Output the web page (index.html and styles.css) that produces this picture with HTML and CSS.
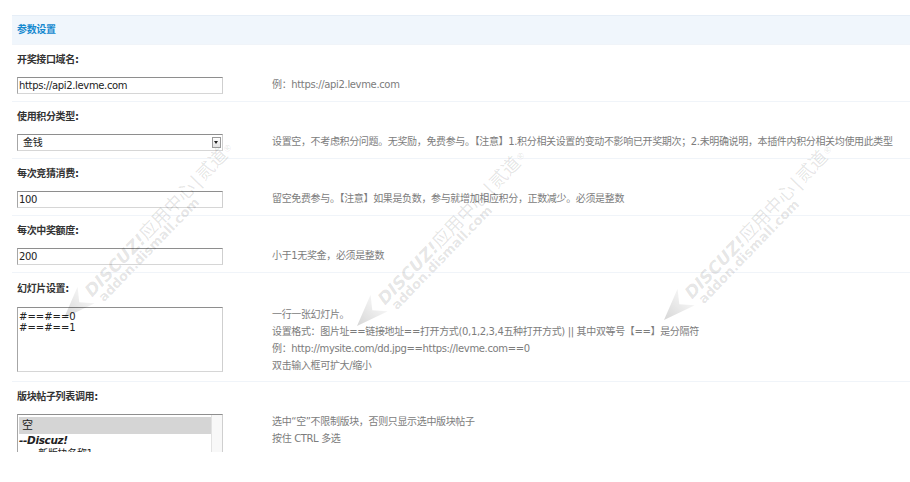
FILE: index.html
```html
<!DOCTYPE html>
<html lang="zh-CN">
<head>
<meta charset="utf-8">
<title>参数设置</title>
<link rel="stylesheet" href="styles.css">
</head>
<body>
<div class="page">
  <div class="partition">参数设置</div>

  <div class="row">
    <div class="label">开奖接口域名:</div>
    <div class="field">
      <div class="control"><input class="txt" type="text" value="https://api2.levme.com"></div>
      <div class="tips">例：https://api2.levme.com</div>
    </div>
  </div>

  <div class="row">
    <div class="label">使用积分类型:</div>
    <div class="field">
      <div class="control">
        <div class="select"><span>金钱</span><span class="sel-btn"></span></div>
      </div>
      <div class="tips">设置空，不考虑积分问题。无奖励，免费参与。【注意】1.积分相关设置的变动不影响已开奖期次；2.未明确说明，本插件内积分相关均使用此类型</div>
    </div>
  </div>

  <div class="row">
    <div class="label">每次竞猜消费:</div>
    <div class="field">
      <div class="control"><input class="txt" type="text" value="100"></div>
      <div class="tips">留空免费参与。【注意】如果是负数，参与就增加相应积分，正数减少。必须是整数</div>
    </div>
  </div>

  <div class="row">
    <div class="label">每次中奖额度:</div>
    <div class="field">
      <div class="control"><input class="txt" type="text" value="200"></div>
      <div class="tips">小于1无奖金，必须是整数</div>
    </div>
  </div>

  <div class="row row-tall">
    <div class="label">幻灯片设置:</div>
    <div class="field">
      <div class="control"><textarea class="area">#==#==0
#==#==1</textarea></div>
      <div class="tips">
        <div>一行一张幻灯片。</div>
        <div>设置格式：图片址==链接地址==打开方式(0,1,2,3,4五种打开方式) || 其中双等号【==】是分隔符</div>
        <div>例：http://mysite.com/dd.jpg==https://levme.com==0</div>
        <div>双击输入框可扩大/缩小</div>
      </div>
    </div>
  </div>

  <div class="row">
    <div class="label">版块帖子列表调用:</div>
    <div class="field">
      <div class="control">
        <div class="listbox">
          <div class="opts">
            <div class="opt opt-sel">空</div>
            <div class="opt opt-group">--Discuz!</div>
            <div class="opt">　　新版块名称1</div>
            <div class="opt">　　新版块名称2</div>
          </div>
          <div class="scroll"></div>
        </div>
      </div>
      <div class="tips">
        <div>选中“空”不限制版块，否则只显示选中版块帖子</div>
        <div>按住 CTRL 多选</div>
      </div>
    </div>
  </div>

  <div class="wm wm1">
    <svg class="wm-logo" width="32" height="24" viewBox="0 0 32 24"><defs><linearGradient id="g1" x1="0" y1="0" x2="1" y2="0"><stop offset="0" stop-color="#000" stop-opacity="0.16"/><stop offset="1" stop-color="#000" stop-opacity="0.04"/></linearGradient></defs><polygon points="0,12 32,0 22,12 32,24" fill="url(#g1)"/></svg>
    <div class="wm-text">
      <div class="wm-l1"><span class="wm-dz">DISCUZ!</span>应用中心<span class="wm-bar">|</span>贰道<span class="wm-r">®</span></div>
      <div class="wm-l2">addon.dismall.com</div>
    </div>
  </div>
  <div class="wm wm2">
    <svg class="wm-logo" width="32" height="24" viewBox="0 0 32 24"><defs><linearGradient id="g2" x1="0" y1="0" x2="1" y2="0"><stop offset="0" stop-color="#000" stop-opacity="0.16"/><stop offset="1" stop-color="#000" stop-opacity="0.04"/></linearGradient></defs><polygon points="0,12 32,0 22,12 32,24" fill="url(#g2)"/></svg>
    <div class="wm-text">
      <div class="wm-l1"><span class="wm-dz">DISCUZ!</span>应用中心<span class="wm-bar">|</span>贰道<span class="wm-r">®</span></div>
      <div class="wm-l2">addon.dismall.com</div>
    </div>
  </div>
  <div class="wm wm3">
    <svg class="wm-logo" width="32" height="24" viewBox="0 0 32 24"><defs><linearGradient id="g3" x1="0" y1="0" x2="1" y2="0"><stop offset="0" stop-color="#000" stop-opacity="0.16"/><stop offset="1" stop-color="#000" stop-opacity="0.04"/></linearGradient></defs><polygon points="0,12 32,0 22,12 32,24" fill="url(#g3)"/></svg>
    <div class="wm-text">
      <div class="wm-l1"><span class="wm-dz">DISCUZ!</span>应用中心<span class="wm-bar">|</span>贰道<span class="wm-r">®</span></div>
      <div class="wm-l2">addon.dismall.com</div>
    </div>
  </div>
</div>
</body>
</html>
```

FILE: styles.css
```css
html, body {
  margin: 0;
  padding: 0;
  background: #fff;
}

body {
  font-family: "DejaVu Sans", "Noto Sans CJK SC", sans-serif;
  font-size: 10px;
  line-height: 16px;
  letter-spacing: -0.35px;
  color: #333;
}

.page {
  position: relative;
  height: 452px;
  overflow: hidden;
  padding: 15px 0 0 12px;
  box-sizing: border-box;
}

.partition {
  height: 29px;
  box-sizing: border-box;
  border-top: 1px solid #e6eef7;
  background: #f0f6fc;
  color: #1589cf;
  font-weight: bold;
  padding-left: 5px;
  line-height: 28px;
}

.row {
  border-top: 1px solid #f0f4f9;
  padding: 7px 0 7px 5px;
}

.row-tall {
  padding-top: 8px;
}

.row-tall .label {
  margin-bottom: 10px;
}

.label {
  font-weight: bold;
  color: #333;
  line-height: 16px;
  margin-bottom: 9px;
}

.field {
  display: flex;
  align-items: flex-start;
}

.control {
  width: 250px;
  flex: none;
}

.tips {
  padding-left: 5px;
  margin-top: -1px;
  color: #7c7c7c;
  line-height: 17px;
  white-space: nowrap;
}

.txt {
  display: block;
  width: 206px;
  height: 17px;
  box-sizing: border-box;
  margin: 0;
  padding: 0 1px;
  border: 1px solid;
  border-color: #8e8e8e #cfcfcf #d6d6d6 #a6a6a6;
  background: #fff;
  font: inherit;
  letter-spacing: inherit;
  color: #222;
  outline: none;
}

.select {
  display: flex;
  align-items: center;
  justify-content: space-between;
  width: 206px;
  height: 17px;
  box-sizing: border-box;
  border: 1px solid;
  border-color: #8e8e8e #cfcfcf #d6d6d6 #a6a6a6;
  padding: 0 1px 0 5px;
  color: #222;
  background: #fff;
}

.sel-btn {
  position: relative;
  width: 9px;
  height: 11px;
  box-sizing: border-box;
  border: 1px solid #9a9a9a;
  background: linear-gradient(#ffffff, #e2e2e2);
}

.sel-btn::after {
  content: "";
  position: absolute;
  left: 1px;
  top: 3px;
  border-left: 2.5px solid transparent;
  border-right: 2.5px solid transparent;
  border-top: 3px solid #222;
}

.area {
  display: block;
  width: 206px;
  height: 65px;
  box-sizing: border-box;
  margin: 0;
  padding: 3px 1px;
  border: 1px solid;
  border-color: #8e8e8e #cfcfcf #d6d6d6 #a6a6a6;
  background: #fff;
  font: inherit;
  font-size: 10px;
  line-height: 11px;
  letter-spacing: 0;
  color: #222;
  resize: none;
  outline: none;
  overflow: hidden;
}

.listbox {
  display: flex;
  width: 206px;
  height: 90px;
  box-sizing: border-box;
  border: 1px solid;
  border-color: #8e8e8e #cfcfcf #d6d6d6 #a6a6a6;
  background: #fff;
}

.opts {
  flex: 1;
  padding: 2px 0 0 1px;
  color: #222;
}

.opt {
  height: 13px;
  line-height: 13px;
  white-space: nowrap;
}

.opt-sel {
  height: 17px;
  line-height: 17px;
  background: #d5d5d5;
  padding-left: 3px;
  font-size: 11px;
}

.opt-group {
  font-weight: bold;
  font-style: italic;
  font-size: 10.5px;
}

.scroll {
  width: 10px;
  flex: none;
  border-left: 1px solid #e2e2e2;
  background: #f8f8f8;
}

/* watermark overlay */
.wm {
  position: absolute;
  display: flex;
  align-items: flex-start;
  height: 24px;
  transform-origin: 0 12px;
  transform: rotate(-46deg);
  color: rgba(0, 0, 0, 0.11);
  white-space: nowrap;
  pointer-events: none;
  letter-spacing: 0;
}

.wm-logo {
  flex: none;
}

.wm-text {
  margin-left: 2px;
  margin-top: 2px;
}

.wm-l1 {
  font-size: 18px;
  line-height: 20px;
}

.wm-dz {
  font-style: italic;
  font-weight: bold;
  font-size: 17px;
}

.wm-bar {
  font-weight: normal;
  margin: 0 2px;
}

.wm-r {
  font-size: 9px;
  vertical-align: top;
}

.wm-l2 {
  font-size: 13px;
  line-height: 14px;
  font-weight: bold;
  padding-left: 5px;
  margin-top: -3px;
}

.wm1 { left: 64px; top: 306px; }
.wm2 { left: 357px; top: 314px; }
.wm3 { left: 664px; top: 308px; }
```
